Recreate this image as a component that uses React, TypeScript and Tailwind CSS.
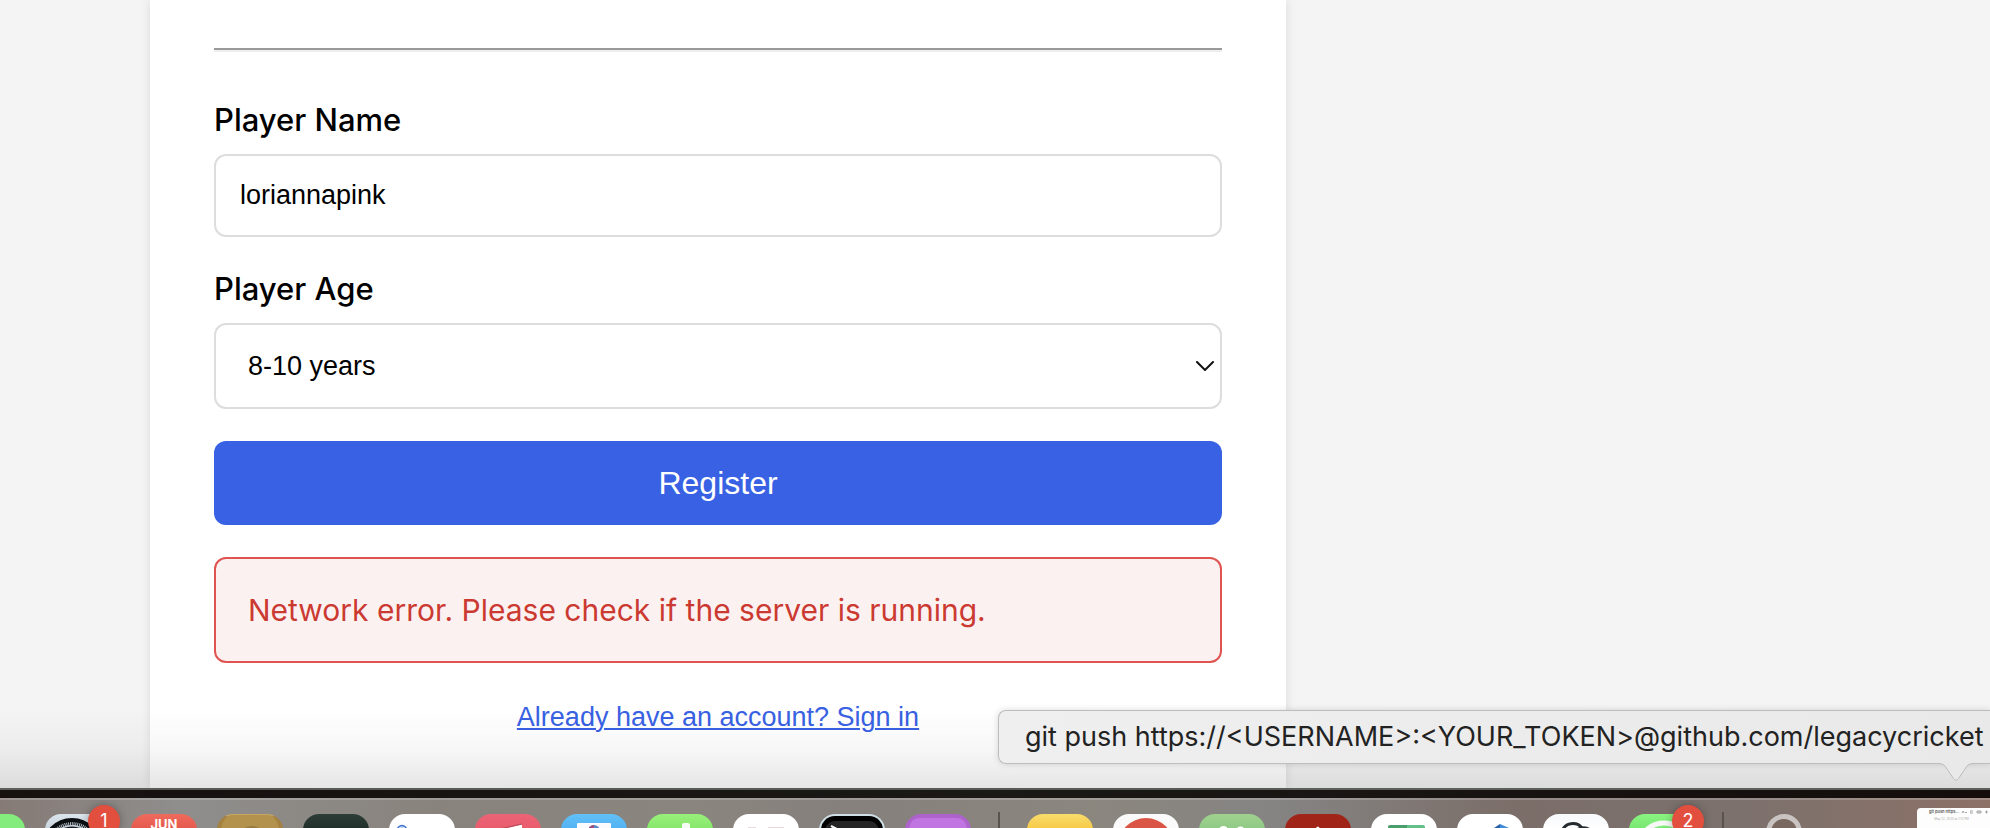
import { ReactNode } from "react";

function Tile({ className = "", children, badge }: { className?: string; children?: ReactNode; badge?: string }) {
  return (
    <div className="relative h-4 w-[66px] shrink-0">
      <div className={"h-full w-full overflow-hidden rounded-t-2xl " + className}>{children}</div>
      {badge && (
        <span className="absolute -top-[9px] left-[43px] flex size-8 items-center justify-center rounded-full bg-[#e34f3f] text-lg leading-5 text-white shadow-[0_0_8px_rgba(0,0,0,0.3)]">
          {badge}
        </span>
      )}
    </div>
  );
}

function Separator() {
  return <div className="mx-[7px] -mt-0.5 h-5 w-0.5 shrink-0 bg-[#59524e]" />;
}

function Art({ children }: { children: ReactNode }) {
  return (
    <svg viewBox="0 0 66 16" className="block h-4 w-[66px]" aria-hidden="true">
      {children}
    </svg>
  );
}

function Dock() {
  return (
    <footer className="flex h-[30px] shrink-0 gap-5 overflow-hidden border-t-2 border-white/20 bg-[linear-gradient(90deg,#857a76_0%,#8f8e8c_9%,#89837d_22%,#8a857e_35%,#86807d_42%,#8b867e_55%,#858483_64%,#7b6e69_76%,#7c716d_87%,#8c7167_100%)] pt-3.5">
      <div className="-ml-[41px]">
        <Tile className="bg-[#83ec7d]" />
      </div>
      <Tile className="bg-linear-to-b from-[#dbe5ec] to-[#c6d2db]" badge="1">
        <Art>
          <circle cx="27" cy="34" r="28" fill="#c3ced6" stroke="#0c0f12" strokeWidth="4" />
          <circle cx="27" cy="34" r="25" fill="none" stroke="#0c0f12" strokeWidth="4" strokeDasharray="1 0.9" />
          <circle cx="27" cy="34" r="20" fill="#dbe4ea" stroke="#111820" strokeWidth="3" />
        </Art>
      </Tile>
      <Tile className="bg-linear-to-b from-[#ee6b5d] to-[#e5574c] pt-1 text-center text-[13px] leading-3 font-bold text-white">
        JUN
      </Tile>
      <Tile className="border-x-4 border-t border-[#a5813f] border-t-[#c6a662] bg-[#b3924d]">
        <svg viewBox="0 0 58 16" className="block h-4 w-[58px]" aria-hidden="true">
          <circle cx="31" cy="25" r="14" fill="#987a40" />
        </svg>
      </Tile>
      <Tile className="bg-linear-to-b from-[#2e3d38] to-[#202e2a]" />
      <Tile className="bg-white">
        <Art>
          <circle cx="13" cy="16" r="4.5" fill="#cfe0fb" stroke="#3a6fd0" strokeWidth="1.4" />
          <circle cx="13" cy="16" r="1.8" fill="none" stroke="#3a6fd0" />
        </Art>
      </Tile>
      <Tile className="bg-linear-to-b from-[#eb6476] to-[#e95b6d]">
        <Art>
          <path d="M25 15.500 L47 10.500 V16 H25Z" fill="#fff" />
          <path d="M25 15 L47 10" stroke="#b34755" />
        </Art>
      </Tile>
      <Tile className="bg-linear-to-b from-[#62c1f7] to-[#51b0f2]">
        <Art>
          <rect x="16" y="9" width="34" height="10" rx="1" fill="#fbfbfd" />
          <circle cx="33" cy="17" r="6" fill="#5a86cb" />
          <path d="M33 11 A6 6 0 0 0 27 17 H33Z" fill="#a04a7d" />
        </Art>
      </Tile>
      <Tile className="bg-linear-to-b from-[#98f17a] to-[#86e56b]">
        <Art>
          <rect x="35" y="9" width="8" height="12" rx="2" fill="#f7fbf5" />
        </Art>
      </Tile>
      <Tile className="bg-white">
        <Art>
          <path d="M15 14.500 H23 M35 14.500 H51" stroke="#e6d9dc" strokeWidth="3" />
        </Art>
      </Tile>
      <Tile className="border-x-2 border-t-2 border-[#cfdfe6] bg-black">
        <svg viewBox="0 0 62 16" className="block h-4 w-[62px]" aria-hidden="true">
          <rect x="4" y="5" width="54" height="30" rx="10" fill="#252525" />
          <path d="M10 10 L16 13" stroke="#fff" strokeWidth="2" />
        </svg>
      </Tile>
      <Tile className="bg-[#ad63cb]">
        <Art>
          <rect x="4" y="4" width="58" height="40" rx="11" fill="#c175e2" />
        </Art>
      </Tile>
      <Separator />
      <Tile className="bg-linear-to-b from-[#f9dd6c] to-[#f6c83f]" />
      <Tile className="bg-[#fafafa]">
        <Art>
          <circle cx="33" cy="32" r="28" fill="#db5546" />
        </Art>
      </Tile>
      <Tile className="bg-linear-to-b from-[#a0d28e] to-[#8dc985]">
        <Art>
          <circle cx="24.500" cy="17" r="5" fill="#fff" />
          <circle cx="41.500" cy="17" r="4.500" fill="#fff" />
        </Art>
      </Tile>
      <Tile className="bg-[#a02417]">
        <Art>
          <path d="M29.500 17 Q31 12.500 33 12.500 Q34.500 12.500 35.500 17Z" fill="#fff" />
        </Art>
      </Tile>
      <Tile className="bg-white">
        <Art>
          <path d="M17 16 V13 Q17 11 19 11 H36 V16Z" fill="#4a9e6b" />
          <path d="M36 11 H52 Q54 11 54 13 V16 H36Z" fill="#62c088" />
        </Art>
      </Tile>
      <Tile className="bg-white">
        <Art>
          <path d="M37 14 L43 10 V16 H37Z" fill="#2a60a8" />
          <path d="M43 10 L52 14 V16 H43Z" fill="#3f8cdc" />
        </Art>
      </Tile>
      <Tile className="bg-linear-to-b from-[#f7f9fb] to-white">
        <Art>
          <path d="M19 17 Q22 9.500 30 9.500 Q36 9.500 39 14" fill="none" stroke="#262b30" strokeWidth="3" />
          <path d="M34 14 Q44 9.500 50 17 H40Z" fill="#262b30" />
        </Art>
      </Tile>
      <Tile className="bg-linear-to-b from-[#8af481] to-[#76e66f]" badge="2">
        <Art>
          <ellipse cx="35" cy="27" rx="22" ry="18" fill="#7fe877" stroke="#f5f8f5" strokeWidth="5" />
        </Art>
      </Tile>
      <Separator />
      <Tile className="bg-transparent">
        <Art>
          <circle cx="33" cy="18" r="15.500" fill="#79685f" stroke="#c9c3c1" strokeWidth="5" />
        </Art>
      </Tile>
      <div className="-mt-1.5 ml-20 flex-1 overflow-hidden rounded-tl-sm bg-[#fdfdfd] pl-1 whitespace-nowrap">
        <div className="flex h-2 items-center gap-0.5">
          <span className="size-0.5 rounded-full bg-[#ee4b40]" />
          <span className="size-0.5 rounded-full bg-[#f0b030]" />
          <span className="size-0.5 rounded-full bg-[#3bb44a]" />
          <span className="ml-0.5 text-[4px] leading-2 font-semibold text-[#555]">git push https…</span>
          <svg viewBox="0 0 32 4" className="h-1 w-8 shrink-0" fill="none" stroke="#888" strokeWidth="0.7" aria-hidden="true">
            <path d="M1 3 L2 1 L3 3 M4 3 Q5 1 6 3 M9 1 h3 M9 2 h1 M9 3 h3 M16 1 h4 v2 h-4z M18 1 v2 M24 2 h3 M25.500 0.500 v3 M31 1 v2" />
          </svg>
        </div>
        <div className="pr-2 text-center text-[3px] leading-[6px] text-[#aaa]">May 22, 2025 at 1:10 PM</div>
      </div>
    </footer>
  );
}

export default function App() {
  return (
    <div className="flex min-h-screen flex-col overflow-hidden bg-linear-to-r from-[#17110f] via-[#1b1a17] to-[#140d0b] font-['Inter',sans-serif] text-black">
      <div className="relative flex flex-1 flex-col border-b-2 border-[#5c5f5e] bg-[#f4f4f4]">
        <main className="ml-[150px] flex w-full max-w-[1136px] flex-1 flex-col bg-white px-16 pt-12 shadow-[0_0_10px_rgba(0,0,0,0.1)]">
          <hr className="border-t-2 border-b-2 border-t-[#9a9a9a] border-b-[#eeeeee]" />
          <form className="flex flex-col" onSubmit={(e) => e.preventDefault()}>
            <label htmlFor="player-name" className="mt-12 mb-3.5 text-[31px] leading-10 font-medium">
              Player Name
            </label>
            <input
              id="player-name"
              defaultValue="loriannapink"
              className="h-[83px] rounded-xl border-2 border-[#dddddd] px-6 font-['Liberation_Sans',sans-serif] text-[27px]"
            />
            <label htmlFor="player-age" className="mt-8 mb-3.5 text-[31px] leading-10 font-medium">
              Player Age
            </label>
            <div className="relative flex">
              <select
                id="player-age"
                className="h-[86px] w-full appearance-none rounded-xl border-2 border-[#dddddd] bg-white px-8 font-['Liberation_Sans',sans-serif] text-[27px]"
              >
                <option>8-10 years</option>
              </select>
              <svg
                viewBox="0 0 18 10"
                className="pointer-events-none absolute top-[38px] right-2 h-2.5 w-[18px]"
                fill="none"
                stroke="#111"
                strokeWidth="2"
                strokeLinecap="round"
                aria-hidden="true"
              >
                <path d="M1 1 L9 9 L17 1" />
              </svg>
            </div>
            <button
              type="submit"
              className="mt-8 h-[84px] rounded-xl bg-[#3861e3] font-['Liberation_Sans',sans-serif] text-[32px] text-white"
            >
              Register
            </button>
            <p
              role="alert"
              className="mt-8 flex h-[106px] items-center rounded-xl border-2 border-[#df5450] bg-[#fcf1f1] px-8 text-[30px] text-[#cb3a31]"
            >
              Network error. Please check if the server is running.
            </p>
            <a
              href="#signin"
              className="mt-[34px] self-center font-['Liberation_Sans',sans-serif] text-[27px] text-[#3861e3] underline decoration-2 underline-offset-2"
            >
              Already have an account? Sign in
            </a>
          </form>
        </main>
        <div className="pointer-events-none absolute inset-x-0 bottom-0 h-20 bg-linear-to-b from-transparent via-black/3 to-black/10" />
        <div
          role="tooltip"
          className="absolute right-0 bottom-6 left-[998px] flex h-[54px] items-center rounded-l-lg border border-r-0 border-[#bdbdbd] bg-linear-to-r from-[#efefef] to-[#e9e9e9] pl-[26px] text-[27px] whitespace-nowrap text-[#222] shadow-[0_0_6px_rgba(0,0,0,0.15)]"
        >
          git push https://&lt;USERNAME&gt;:&lt;YOUR_TOKEN&gt;@github.com/legacycricket
          <svg viewBox="0 0 34 20" className="absolute top-[52px] right-[17px] h-5 w-[34px]" aria-hidden="true">
            <path d="M0 0 H34 C29 1 28 3 26 6 L19.500 15.500 Q17 19 14.500 15.500 L8 6 C6 3 5 1 0 0Z" fill="#e9e9e9" />
            <path d="M0 0.500 C5 1 6 3 8 6 L14.500 15.500 Q17 19 19.500 15.500 L26 6 C28 3 29 1 34 0.500" fill="none" stroke="#bdbdbd" />
          </svg>
        </div>
      </div>
      <div className="h-2" />
      <Dock />
    </div>
  );
}
